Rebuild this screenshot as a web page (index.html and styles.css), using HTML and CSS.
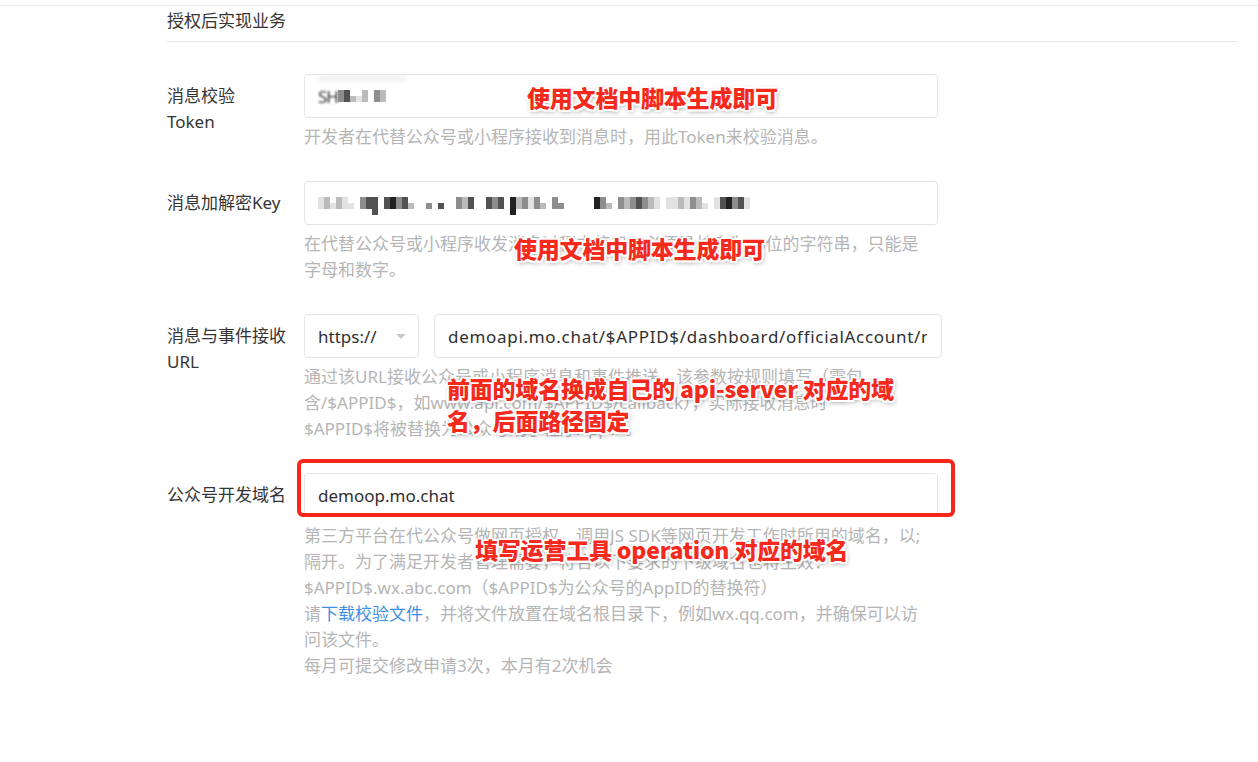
FILE: index.html
```html
<!DOCTYPE html>
<html lang="zh-CN">
<head>
<meta charset="utf-8">
<title>授权后实现业务</title>
<link rel="stylesheet" href="styles.css">
</head>
<body>
<div class="topbar"></div>
<div class="page">
  <div class="section-title">授权后实现业务</div>
  <div class="form">

    <div class="row">
      <div class="label">消息校验<br>Token</div>
      <div class="field">
        <div class="input w-full">
          <span class="smear"></span>
          <span class="blur-text">SH</span>
          <span class="pix"><i class="c"></i><i class="d"></i><i class="b s"></i><i class="a s"></i><i class="b"></i><i class="x"></i><i class="c"></i><i class="b"></i></span>
        </div>
        <div class="desc">开发者在代替公众号或小程序接收到消息时，用此Token来校验消息。</div>
      </div>
      <div class="note note-1">使用文档中脚本生成即可</div>
    </div>

    <div class="row">
      <div class="label">消息加解密Key</div>
      <div class="field">
        <div class="input w-full">
          <span class="pix"><i class="a"></i><i class="b"></i><i class="a s"></i><i class="b"></i><i class="a"></i><i class="a s"></i><i class="x"></i><i class="c"></i><i class="d"></i><i class="d t"></i><i class="x"></i><i class="d"></i><i class="e"></i><i class="c"></i><i class="d"></i><i class="b s"></i><i class="x"></i><i class="x"></i><i class="c s"></i><i class="x"></i><i class="d s"></i><i class="x"></i><i class="x"></i><i class="c"></i><i class="b"></i><i class="d"></i><i class="x"></i><i class="x"></i><i class="d"></i><i class="c"></i><i class="d"></i><i class="x"></i><i class="e t"></i><i class="b"></i><i class="c"></i><i class="a"></i><i class="c"></i><i class="b s"></i><i class="x"></i><i class="c"></i><i class="c s"></i><i class="x"></i><i class="x"></i><i class="x"></i><i class="x"></i><i class="x"></i><i class="e"></i><i class="c"></i><i class="b s"></i><i class="x"></i><i class="c"></i><i class="b"></i><i class="c"></i><i class="d"></i><i class="c"></i><i class="b"></i><i class="a"></i><i class="x"></i><i class="a"></i><i class="a"></i><i class="b"></i><i class="a"></i><i class="c"></i><i class="b"></i><i class="a s"></i><i class="x"></i><i class="a"></i><i class="d"></i><i class="e"></i><i class="c"></i><i class="d"></i><i class="a"></i></span>
        </div>
        <div class="desc">在代替公众号或小程序收发消息过程中使用。必须是长度为43位的字符串，只能是<br>字母和数字。</div>
      </div>
      <div class="note note-2">使用文档中脚本生成即可</div>
    </div>

    <div class="row">
      <div class="label">消息与事件接收<br>URL</div>
      <div class="field">
        <div class="url-group">
          <div class="input select"><span>https://</span><span class="caret"></span></div>
          <div class="input url-input"><span class="input-text">demoapi.mo.chat/$APPID$/dashboard/officialAccount/message</span></div>
        </div>
        <div class="desc">通过该URL接收公众号或小程序消息和事件推送，该参数按规则填写（需包<br>含/$APPID$，如www.api.com/$APPID$/callback），实际接收消息时<br>$APPID$将被替换为公众号或小程序AppId。</div>
      </div>
      <div class="note note-3">前面的域名换成自己的 api-server 对应的域<br>名，后面路径固定</div>
    </div>

    <div class="row">
      <div class="label">公众号开发域名</div>
      <div class="field">
        <div class="input w-full value">demoop.mo.chat</div>
        <div class="desc">第三方平台在代公众号做网页授权、调用JS SDK等网页开发工作时所用的域名，以;<br>隔开。为了满足开发者管理需要，符合以下要求的下级域名也将生效：<br>$APPID$.wx.abc.com（$APPID$为公众号的AppID的替换符）<br>请<a href="#">下载校验文件</a>，并将文件放置在域名根目录下，例如wx.qq.com，并确保可以访<br>问该文件。<br>每月可提交修改申请3次，本月有2次机会</div>
      </div>
      <div class="highlight"></div>
      <div class="note note-4">填写运营工具 operation 对应的域名</div>
    </div>

  </div>
</div>
</body>
</html>
```

FILE: styles.css
```css
body {
  margin: 0;
  background: #ffffff;
  font-family: "Noto Sans", "Noto Sans CJK SC", sans-serif;
  color: #353535;
}

.topbar {
  height: 5px;
  border-bottom: 1px solid #ebebeb;
}

.page {
  padding: 0 20px 40px 167px;
}

.section-title {
  margin-top: 2px;
  font-size: 17px;
  line-height: 26px;
  padding-bottom: 7px;
  border-bottom: 1px solid #e6e6e6;
}

.form {
  padding-top: 32px;
}

.row {
  position: relative;
  display: grid;
  grid-template-columns: 137px auto;
  justify-content: start;
  margin-bottom: 31px;
}

.label {
  padding-top: 9px;
  font-size: 17px;
  line-height: 26px;
  color: #353535;
}

.input {
  position: relative;
  box-sizing: border-box;
  height: 44px;
  border: 1px solid #e5e5e5;
  border-radius: 4px;
  padding: 0 13px;
  display: flex;
  align-items: center;
  font-size: 17px;
  color: #2f2f2f;
  white-space: nowrap;
  overflow: hidden;
}

.w-full {
  width: 634px;
}

.url-group {
  display: flex;
  gap: 15px;
}

.select {
  width: 115px;
  justify-content: space-between;
  padding: 0 12px 0 13px;
}

.caret {
  width: 0;
  height: 0;
  border-left: 5px solid transparent;
  border-right: 5px solid transparent;
  border-top: 5px solid #c9c9c9;
}

.url-input {
  width: 508px;
  padding: 0 14px 0 13px;
}

.input-text {
  flex: 1;
  min-width: 0;
  overflow: hidden;
  letter-spacing: 0.7px;
}

.desc {
  margin-top: 6px;
  font-size: 17px;
  line-height: 26px;
  color: #b5b5b5;
  white-space: nowrap;
}

.desc a {
  color: #3f8fe6;
  text-decoration: none;
}

/* masked secret values */
.smear {
  position: absolute;
  left: 12px;
  top: 1px;
  width: 90px;
  height: 5px;
  border-radius: 3px;
  background: #efefef;
  filter: blur(2px);
}

.blur-text {
  display: inline-block;
  color: #333;
  filter: blur(0.8px);
  letter-spacing: -1px;
}

.pix {
  display: flex;
  align-items: flex-start;
  height: 18px;
  padding-top: 6px;
  filter: blur(0.4px);
}

.pix i {
  display: block;
  width: 6px;
  height: 12px;
}

.pix .a { background: #e2e2e2; }
.pix .b { background: #bbbbbb; }
.pix .c { background: #8e8e8e; }
.pix .d { background: #525252; }
.pix .e { background: #222222; }
.pix .x { background: transparent; }
.pix .s { height: 6px; margin-top: 6px; }
.pix .t { height: 18px; }

/* annotations drawn over the form */
.note {
  position: absolute;
  font-family: "Noto Sans CJK SC", sans-serif;
  font-weight: 900;
  font-size: 23px;
  line-height: 32px;
  letter-spacing: -0.2px;
  color: #f52a1c;
  white-space: nowrap;
  text-shadow:
    2px 0 0 #fff, -2px 0 0 #fff, 0 2px 0 #fff, 0 -2px 0 #fff,
    1.5px 1.5px 0 #fff, -1.5px -1.5px 0 #fff, 1.5px -1.5px 0 #fff, -1.5px 1.5px 0 #fff,
    1px 2px 5px rgba(0, 0, 0, 0.5);
}

.note-1 { left: 360px; top: 7px; }
.note-2 { left: 347px; top: 51px; }
.note-3 { left: 280px; top: 58px; }
.note-4 { left: 308px; top: 60px; }

.highlight {
  position: absolute;
  left: 130px;
  top: -14px;
  width: 658px;
  height: 58px;
  box-sizing: border-box;
  border: 4px solid #f9261a;
  border-radius: 6px;
}
```
